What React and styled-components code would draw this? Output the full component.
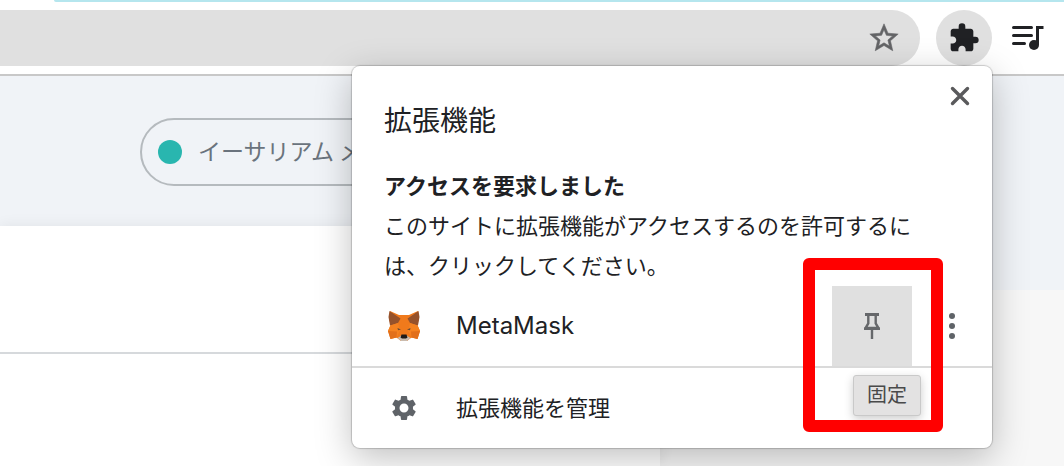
import React from "react";
import styled, { createGlobalStyle } from "styled-components";
import { MdExtension, MdSettings } from "react-icons/md";

const App = () => {
  return (
    <Page>
      <GlobalStyle />
      <TabStrip />
      <Toolbar>
        <AddressBar>
          <IconButton aria-label="ブックマーク">
            <StarIcon />
          </IconButton>
        </AddressBar>
        <ExtensionButton aria-label="拡張機能">
          <MdExtension size="32" />
        </ExtensionButton>
        <IconButton aria-label="メディア">
          <QueueIcon />
        </IconButton>
      </Toolbar>
      <Wallet>
        <NetworkBar>
          <Network>
            <Dot />
            <Label>イーサリアム メ</Label>
          </Network>
        </NetworkBar>
        <Card>
          <CardTop />
        </Card>
      </Wallet>
      <Popup role="dialog" aria-labelledby="popup-title">
        <PopupHead>
          <Title id="popup-title">拡張機能</Title>
          <CloseButton aria-label="閉じる">
            <CloseIcon />
          </CloseButton>
        </PopupHead>
        <Access>
          <AccessTitle>アクセスを要求しました</AccessTitle>
          <AccessText>
            このサイトに拡張機能がアクセスするのを許可するには、クリックしてください。
          </AccessText>
        </Access>
        <Row>
          <ItemButton>
            <FoxIcon />
            <Name>MetaMask</Name>
          </ItemButton>
          <PinHold>
            <PinButton aria-label="固定">
              <PinIcon />
            </PinButton>
            <Tooltip role="tooltip">固定</Tooltip>
            <Highlight />
          </PinHold>
          <MoreButton aria-label="その他">
            <MoreIcon />
          </MoreButton>
        </Row>
        <Footer>
          <ItemButton>
            <GearHold>
              <MdSettings size="30" color="#5f6368" />
            </GearHold>
            <Label>拡張機能を管理</Label>
          </ItemButton>
        </Footer>
      </Popup>
    </Page>
  );
};

export default App;

const StarIcon = () => (
  <svg width="34" height="34" viewBox="0 0 24 24" fill="#636466">
    <path
      d="M22 9.240l-7.190-.62L12 2 9.190 8.630 2 9.240l5.460 4.730L5.820 21 12 17.270 18.180 21l-1.630-7.030L22 9.240zM12 15.400l-3.760 2.270 1-4.280-3.320-2.880 4.380-.38L12 6.100l1.710 4.040 4.380.38-3.320 2.880 1 4.280L12 15.400z"
      stroke="#636466"
      strokeWidth="0.400"
    />
  </svg>
);

const QueueIcon = () => (
  <svg width="32" height="28" viewBox="0 0 32 28" fill="none">
    <path
      d="M1.500 3.500h18M1.500 11.500h18M1.500 19.500h11"
      stroke="#202124"
      strokeWidth="3"
      strokeLinecap="round"
    />
    <path d="M25.500 21V3.500h6" stroke="#202124" strokeWidth="3" />
    <circle cx="22" cy="21" r="5" fill="#202124" />
  </svg>
);

const CloseIcon = () => (
  <svg width="20" height="20" viewBox="0 0 20 20">
    <path
      d="M2.500 2.500l15 15M17.500 2.500l-15 15"
      stroke="#5a5a5c"
      strokeWidth="3.400"
      strokeLinecap="round"
    />
  </svg>
);

const PinIcon = () => (
  <svg width="16" height="26" viewBox="0 0 16 26" fill="none" stroke="#66686b">
    <path d="M1 1.500h14" strokeWidth="3" />
    <path d="M4.300 2v8.500L1.500 15h13l-2.800-4.500V2" strokeWidth="2.400" />
    <path d="M0 15.700h16M8 16v10" strokeWidth="2.400" />
  </svg>
);

const MoreIcon = () => (
  <svg width="6" height="26" viewBox="0 0 6 26" fill="#5f6368">
    <circle cx="3" cy="3" r="3" />
    <circle cx="3" cy="13" r="3" />
    <circle cx="3" cy="23" r="3" />
  </svg>
);

const FoxIcon = () => (
  <svg width="32" height="32" viewBox="0 0 32 32">
    <path
      d="M2 1l9 4h10l9-4 1 6-1.500 8L32 21l-2.500 8-6-1.500L19 31h-6l-4.500-3.500-6 1.500L0 21l2.500-6L1 7z"
      fill="#f07a1c"
    />
    <path d="M1.500 1L12.500 8.500 10 13l-8 2.500L.5 7z" fill="#96522b" />
    <path d="M30.500 1L19.500 8.500 22 13l8 2.500L31.500 7z" fill="#96522b" />
    <path d="M2.500 15.500L10 13l2 7.500L8.500 28 0 21z" fill="#f58220" />
    <path d="M29.500 15.500L22 13l-2 7.500 3.500 7.500L32 21z" fill="#f58220" />
    <path d="M0 21l9 .5-.5 6-6 1.500zM32 21l-9 .5.5 6 6 1.500z" fill="#e2701b" />
    <path d="M9.500 18l3.500 1.500-3 .8zM22.500 18L19 19.500l3 .8z" fill="#6a4a35" />
    <path d="M9.500 28l4-2.500h5l4 2.500-3.500 3h-6z" fill="#c9bcb0" />
    <path d="M13.500 24.500h5l1 3-1.500 1h-4l-1.500-1z" fill="#1f1a17" />
  </svg>
);

const GlobalStyle = createGlobalStyle`
  * {
    box-sizing: border-box;
  }
  body {
    margin: 0;
    color: #202124;
    font-family: "Noto Sans CJK JP", sans-serif;
    font-size: 22px;
    line-height: 40px;
  }
  button {
    padding: 0;
    border: none;
    background: none;
    color: inherit;
    font: inherit;
    display: flex;
    align-items: center;
    justify-content: center;
  }
  svg {
    display: block;
    flex-shrink: 0;
  }
`;

const Page = styled.div`
  position: relative;
  display: flex;
  flex-direction: column;
  min-height: 100vh;
  overflow: hidden;
  background-color: #ffffff;
`;
const TabStrip = styled.div`
  height: 2px;
  margin-left: 54px;
  background-color: #b5e6ee;
  border-bottom-left-radius: 4px;
`;
const Toolbar = styled.div`
  display: flex;
  align-items: center;
  padding: 8px 20px 8px 0;
  border-bottom: 2px solid #c8c8c8;
`;
const AddressBar = styled.div`
  flex: 1;
  display: flex;
  align-items: center;
  justify-content: flex-end;
  height: 56px;
  padding-right: 19px;
  background-color: #e0e0e0;
  border-radius: 0 28px 28px 0;
`;
const IconButton = styled.button``;
const ExtensionButton = styled.button`
  width: 56px;
  height: 56px;
  margin: 0 20px 0 16px;
  border-radius: 100%;
  background-color: #e0e0e0;
`;
const Wallet = styled.div`
  flex: 1;
  display: flex;
  flex-direction: column;
  background: linear-gradient(#f0f3f7 214px, #f7f7f7 214px);
`;
const NetworkBar = styled.div`
  padding: 42px 140px 40px;
`;
const Network = styled.button`
  width: 360px;
  height: 68px;
  padding: 0 16px;
  gap: 16px;
  justify-content: flex-start;
  border: 2px solid #b5babe;
  border-radius: 34px;
  color: #6a737d;
  font-size: 23px;
  white-space: nowrap;
`;
const Dot = styled.span`
  width: 24px;
  height: 24px;
  border-radius: 100%;
  background-color: #29b6af;
`;
const Label = styled.span`
  padding-bottom: 4px;
`;
const Card = styled.div`
  flex: 1;
  width: 62%;
  background-color: #ffffff;
  box-shadow: 0 0 14px rgba(0, 0, 0, 0.07);
`;
const CardTop = styled.div`
  height: 128px;
  border-bottom: 2px solid #d6d9dc;
`;
const Popup = styled.div`
  position: absolute;
  top: 66px;
  right: 72px;
  width: 640px;
  background-color: #ffffff;
  border-radius: 8px;
  box-shadow: 0 0 1px 1px rgba(0, 0, 0, 0.18), 0 10px 36px rgba(0, 0, 0, 0.25);
`;
const PopupHead = styled.div`
  display: flex;
  align-items: flex-start;
  justify-content: space-between;
  padding: 10px 12px 25px 32px;
`;
const Title = styled.h1`
  margin: 23px 0 0;
  font-size: 28px;
  font-weight: 400;
`;
const CloseButton = styled.button`
  width: 40px;
  height: 40px;
`;
const Access = styled.div`
  padding: 0 76px 2px 32px;
`;
const AccessTitle = styled.h2`
  margin: 0;
  font-size: 22px;
  font-weight: 700;
`;
const AccessText = styled.p`
  margin: 0;
`;
const Row = styled.div`
  display: flex;
  border-bottom: 2px solid #dadada;
`;
const ItemButton = styled.button`
  flex: 1;
  height: 80px;
  padding-left: 36px;
  gap: 36px;
  justify-content: flex-start;
`;
const Name = styled.span`
  font-family: Inter, "Noto Sans CJK JP", sans-serif;
  font-size: 24px;
`;
const GearHold = styled.span`
  width: 32px;
  display: flex;
  justify-content: center;
`;
const PinHold = styled.div`
  position: relative;
`;
const PinButton = styled.button`
  width: 80px;
  height: 80px;
  background-color: #e0e0e0;
`;
const MoreButton = styled.button`
  width: 80px;
  height: 80px;
`;
const Footer = styled.div`
  display: flex;
`;
const Tooltip = styled.div`
  position: absolute;
  top: 89px;
  left: 21px;
  padding: 0 13px 3px;
  white-space: nowrap;
  font-size: 20px;
  line-height: 36px;
  color: #4a4a4a;
  background-color: #e3e2e2;
  border: 1px solid #c9c9c9;
  border-radius: 3px;
  box-shadow: 0 3px 10px rgba(0, 0, 0, 0.2);
`;
const Highlight = styled.div`
  position: absolute;
  top: -28px;
  left: -29px;
  width: 140px;
  height: 174px;
  border: 12px solid #ff0000;
  border-radius: 6px;
  pointer-events: none;
`;
